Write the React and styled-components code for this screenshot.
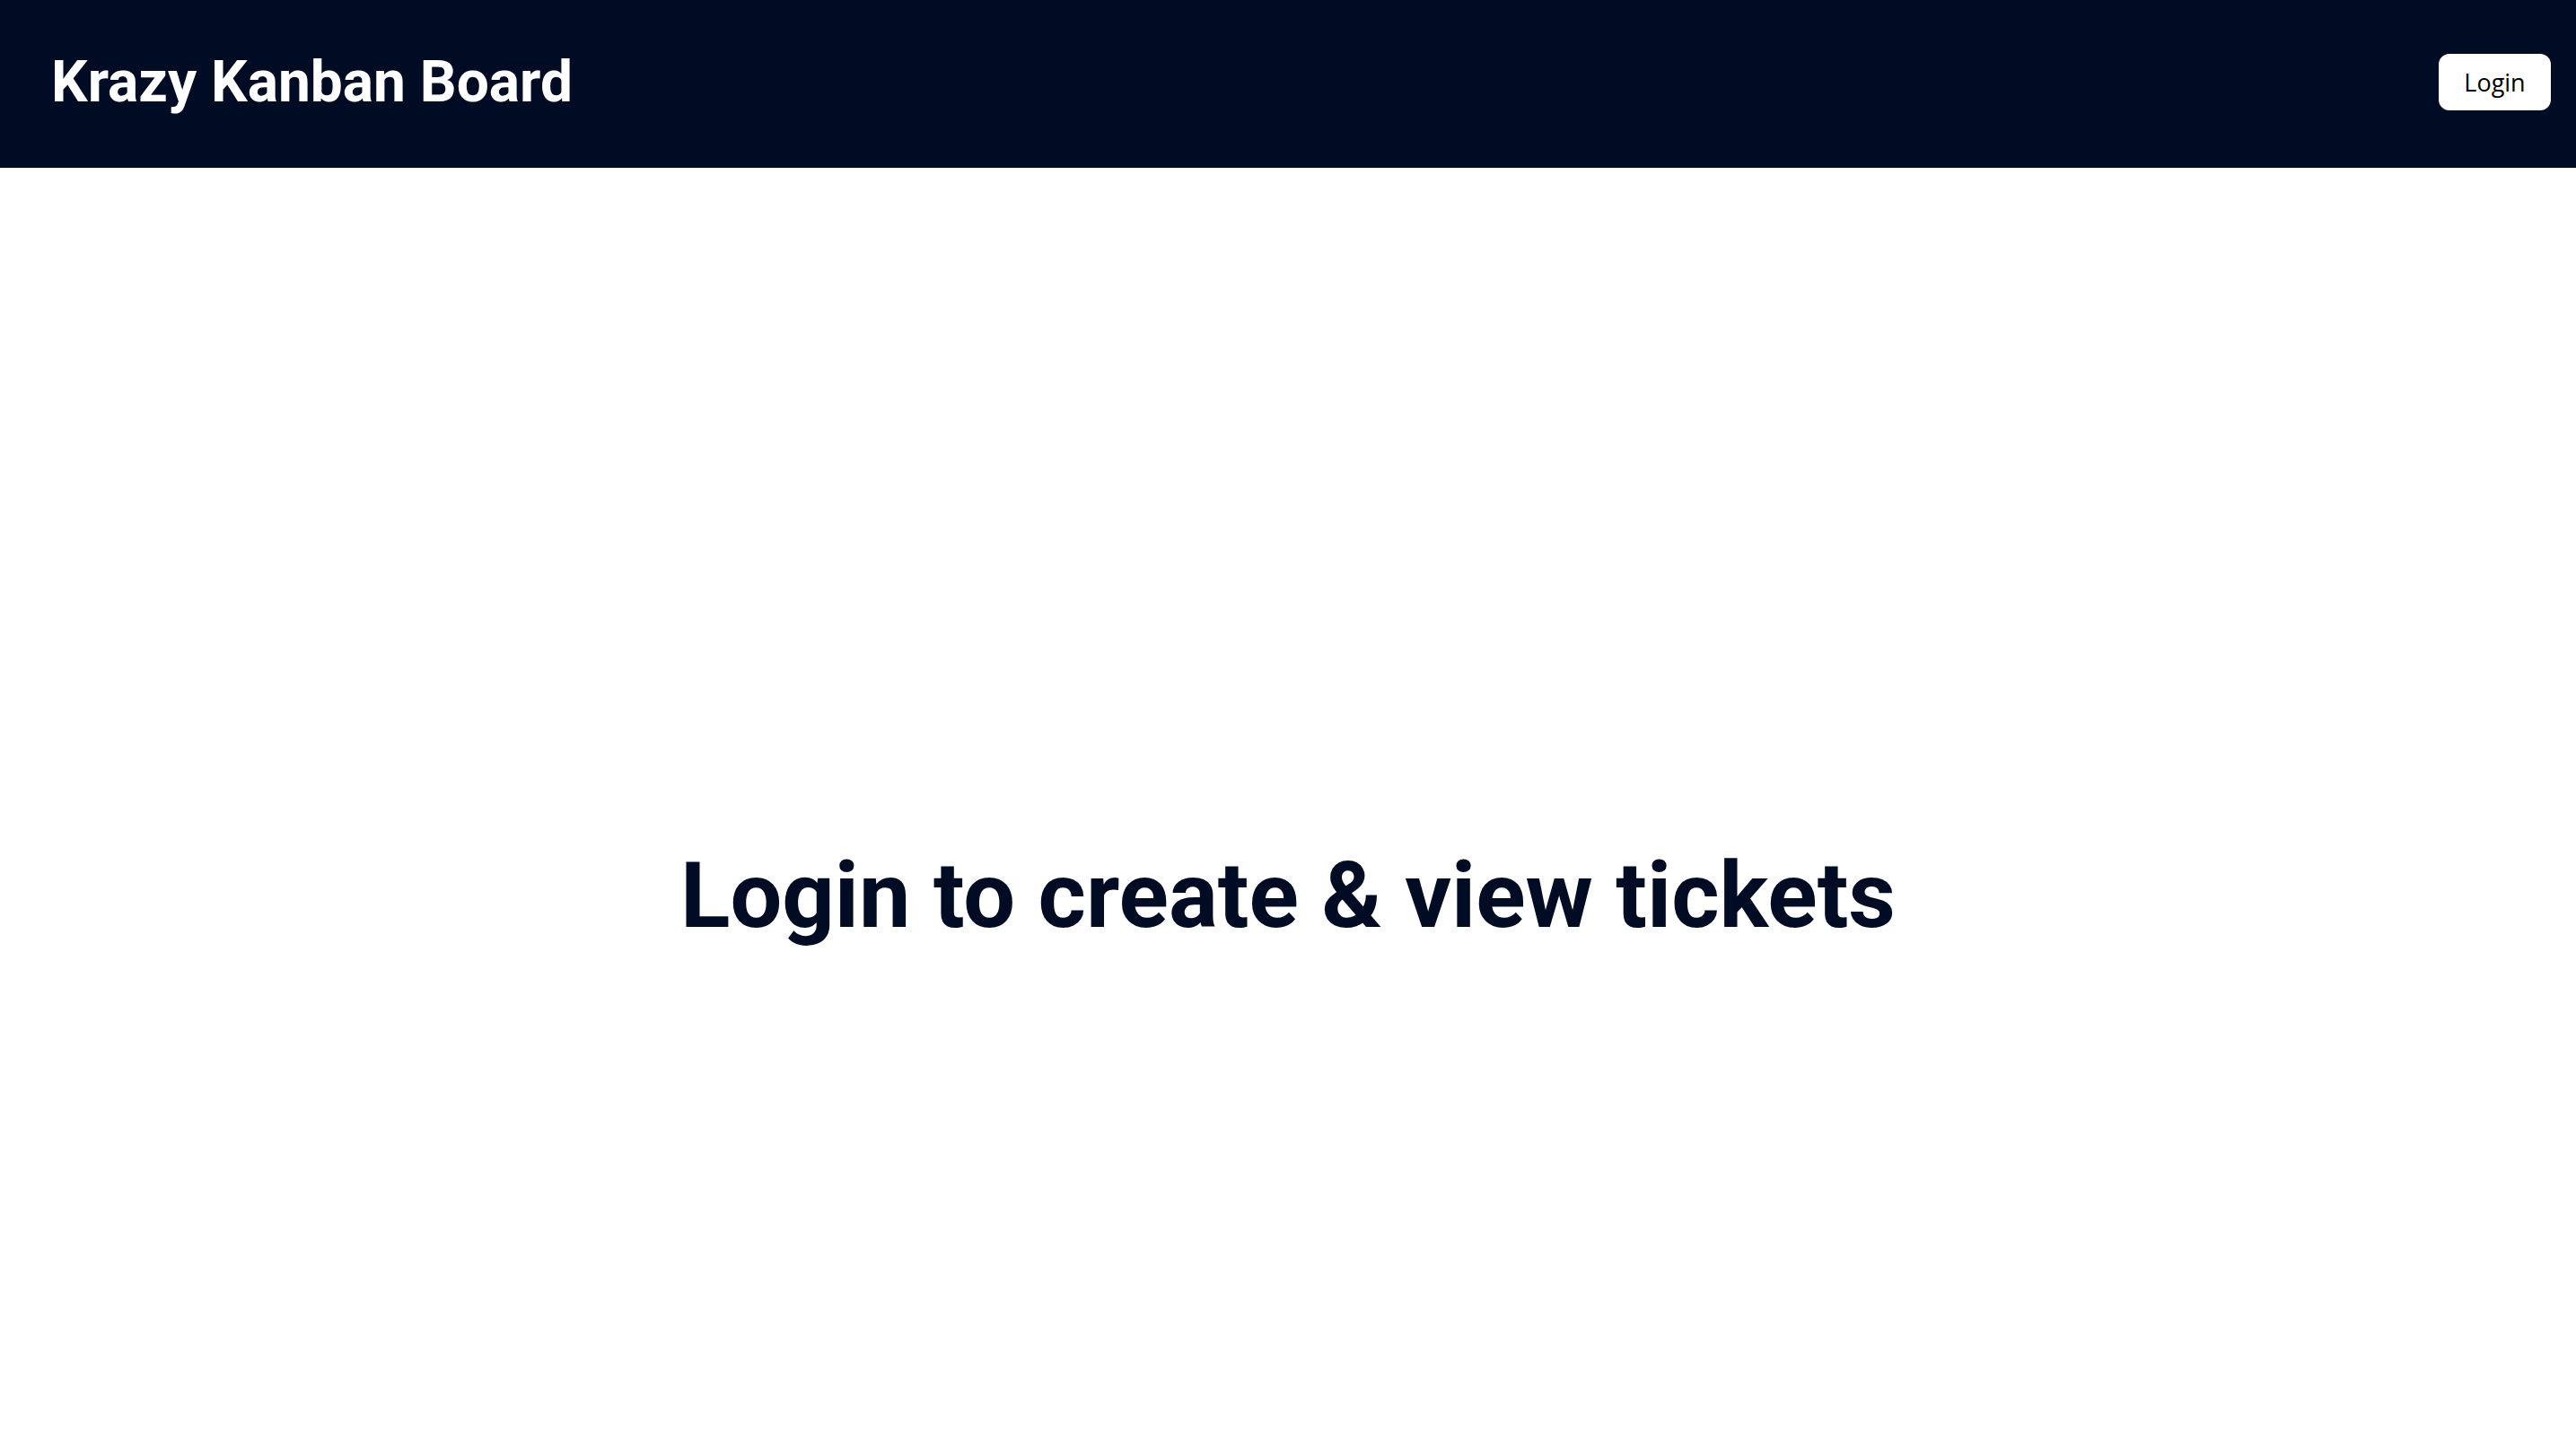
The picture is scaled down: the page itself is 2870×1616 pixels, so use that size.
import styled, { createGlobalStyle } from 'styled-components';

const GlobalStyle = createGlobalStyle`
  html, body {
    margin: 0;
    padding: 0;
    background: #ffffff;
    font-family: Roboto, 'Liberation Sans', sans-serif;
  }
`;

const Page = styled.div`
  min-height: 100vh;
  display: flex;
  flex-direction: column;
`;

const Nav = styled.header`
  height: 187px;
  box-sizing: border-box;
  background-color: #000b24;
  display: flex;
  align-items: center;
  justify-content: space-between;
  padding: 0 28px 4px 57px;
`;

const Brand = styled.h1`
  margin: 0;
  color: #ffffff;
  font-family: Roboto, 'Liberation Sans', sans-serif;
  font-weight: 700;
  font-size: 64px;
`;

const LoginButton = styled.button`
  width: 125px;
  height: 63px;
  border: none;
  border-radius: 12px;
  background: #ffffff;
  color: #000000;
  font-family: 'Open Sans', 'Noto Sans', sans-serif;
  font-size: 27px;
  cursor: pointer;
`;

const Main = styled.main`
  flex: 1;
  display: flex;
  justify-content: center;
  padding-top: 750px;
  box-sizing: border-box;
`;

const Message = styled.h2`
  margin: 0;
  color: #000b24;
  font-family: Roboto, 'Liberation Sans', sans-serif;
  font-weight: 700;
  font-size: 102.5px;
  line-height: 1.2;
`;

export default function App() {
  return (
    <>
      <GlobalStyle />
      <Page>
        <Nav>
          <Brand>Krazy Kanban Board</Brand>
          <LoginButton>Login</LoginButton>
        </Nav>
        <Main>
          <Message>Login to create &amp; view tickets</Message>
        </Main>
      </Page>
    </>
  );
}
